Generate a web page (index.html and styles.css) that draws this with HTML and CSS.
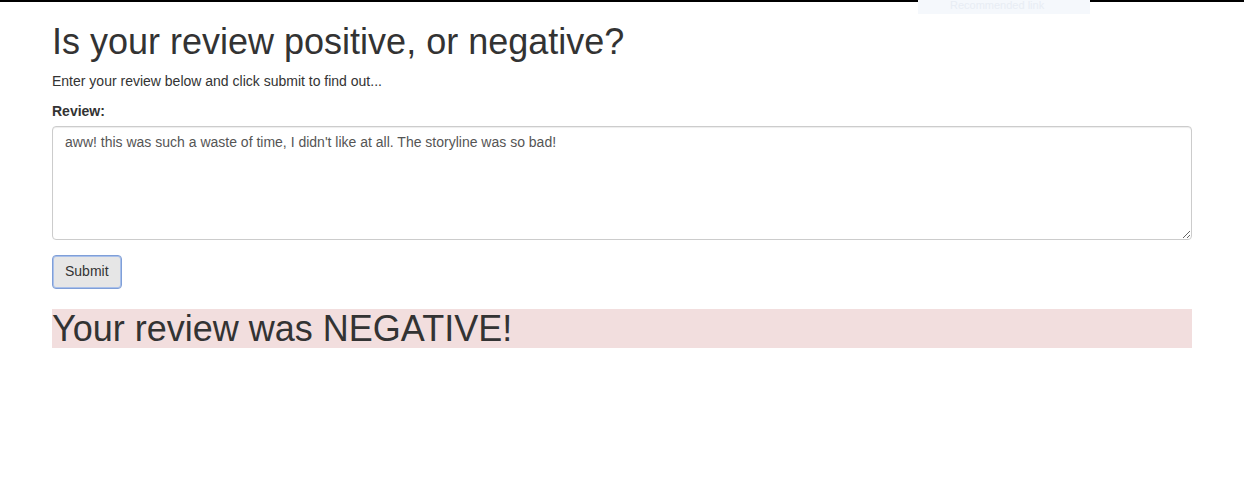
FILE: index.html
```html
<!DOCTYPE html>
<html lang="en">
<head>
<meta charset="utf-8">
<title>Review Sentiment</title>
<link rel="stylesheet" href="styles.css">
</head>
<body>
<div class="topbar"></div>
<div class="ghost">Recommended link</div>
<div class="container">
  <h1 class="title">Is your review positive, or negative?</h1>
  <p class="lead-text">Enter your review below and click submit to find out...</p>
  <form class="form">
    <div class="form-group">
      <label class="label" for="review">Review:</label>
      <textarea id="review" class="textarea" rows="5" spellcheck="false">aww! this was such a waste of time, I didn't like at all. The storyline was so bad!</textarea>
    </div>
    <button type="button" class="btn">Submit</button>
  </form>
  <h1 class="result">Your review was NEGATIVE!</h1>
</div>
</body>
</html>
```

FILE: styles.css
```css
html, body {
  margin: 0;
  padding: 0;
  background: #fff;
}
body {
  font-family: "Liberation Sans", Arial, sans-serif;
  font-size: 14px;
  line-height: 1.42857;
  color: #333;
  padding-right: 1px;
}
.topbar {
  height: 2px;
  background: #000;
}
.ghost {
  position: absolute;
  top: 0;
  left: 918px;
  width: 172px;
  height: 14px;
  background: #f5f8fc;
  color: #e8edf4;
  font-size: 11px;
  line-height: 11px;
  padding-left: 32px;
  box-sizing: border-box;
  overflow: hidden;
}
.container {
  width: 1170px;
  margin: 0 auto;
  padding: 0 15px;
  box-sizing: border-box;
}
.title {
  font-size: 36px;
  font-weight: 500;
  line-height: 1.1;
  margin: 20px 0 10px;
}
.lead-text {
  margin: 0 0 10px;
}
.form-group {
  margin-bottom: 15px;
}
.label {
  display: block;
  font-weight: bold;
  margin-bottom: 4px;
}
.textarea {
  display: block;
  width: 100%;
  box-sizing: border-box;
  height: 114px;
  padding: 6px 12px;
  font-family: "Liberation Sans", Arial, sans-serif;
  font-size: 14px;
  line-height: 1.42857;
  color: #555;
  border: 1px solid #ccc;
  border-radius: 4px;
  box-shadow: inset 0 1px 1px rgba(0,0,0,.075);
  resize: vertical;
  margin: 0;
}
.btn {
  display: block;
  height: 34px;
  padding: 6px 12px;
  font-family: "Liberation Sans", Arial, sans-serif;
  font-size: 14px;
  line-height: 1.42857;
  color: #333;
  background: #e6e6e6;
  border: 1px solid #7f9fd8;
  border-radius: 4px;
  box-shadow: 0 0 0 1px #a9c0ea inset;
  cursor: pointer;
}
.result {
  font-size: 36px;
  font-weight: 500;
  line-height: 1.1;
  margin: 20px 0 10px;
  background: #f2dede;
  color: #333;
}
```
